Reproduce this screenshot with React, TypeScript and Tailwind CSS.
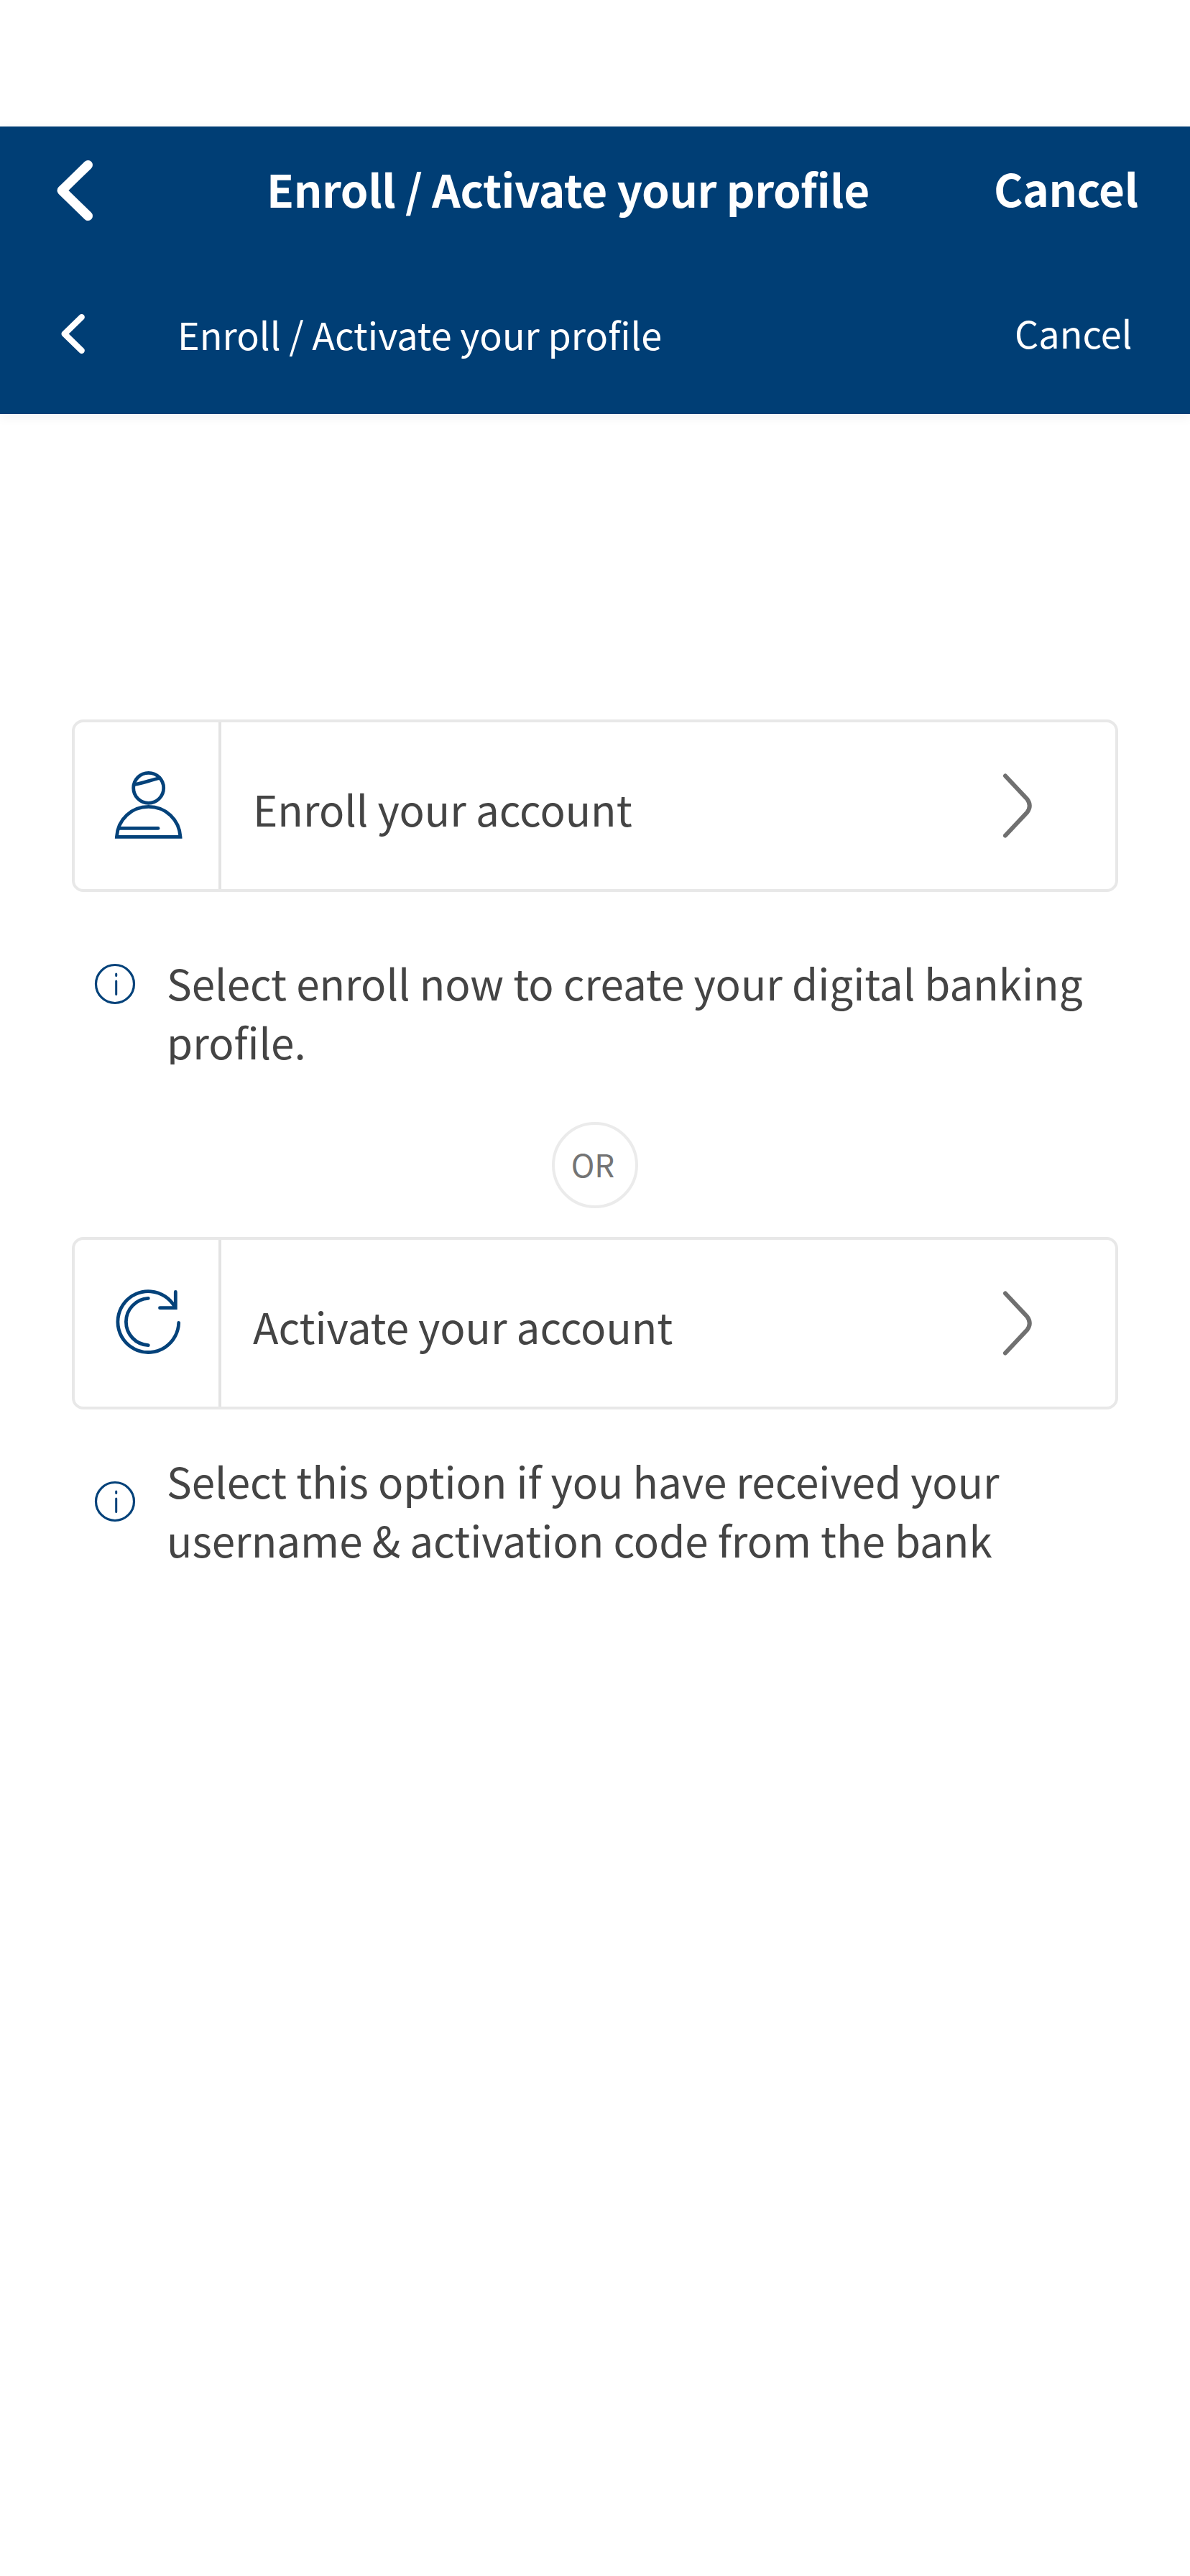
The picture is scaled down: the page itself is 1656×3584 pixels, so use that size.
import type { ReactNode } from "react";

function BackIcon({ className }: { className: string }) {
  return (
    <svg className={className} viewBox="0 0 50 84" fill="none" stroke="#fff" strokeWidth="13" strokeLinecap="round" strokeLinejoin="round">
      <path d="M43.5 6.5 L7 42 L43.5 77.5" />
    </svg>
  );
}

function PersonIcon() {
  return (
    <svg className="h-[100px] w-[100px]" viewBox="0 0 100 100" fill="none" stroke="#04427a" strokeWidth="4.8">
      <circle cx="49.7" cy="29.3" r="21" />
      <path d="M30.5 24.4 C40 23 52 18.5 65 15.5" strokeLinecap="round" />
      <path d="M5.4 97.3 C7 73 26 55.4 49.7 55.4 C73.4 55.4 92.4 73 94 97.3 Z" />
      <path d="M9 85.4 H63" strokeLinecap="round" />
    </svg>
  );
}

function RefreshIcon() {
  return (
    <svg className="h-[100px] w-[100px]" viewBox="0 0 100 100" fill="none" stroke="#04427a" strokeWidth="4.8" strokeLinecap="round">
      <path d="M91.7 53.5 A42.4 42.4 0 1 1 85.8 30.5" />
      <path d="M49.3 84.7 A32.7 32.7 0 0 1 49.3 19.4" />
      <path d="M87.3 10.5 V32.7 H65.5" />
    </svg>
  );
}

function InfoIcon() {
  return (
    <svg className="h-[58px] w-[58px] shrink-0" viewBox="0 0 58 58" fill="none" stroke="#04427a" strokeLinecap="round">
      <circle cx="29" cy="29" r="26.5" strokeWidth="3.2" />
      <path d="M30.7 15 V17.5 M30.7 25 V43.5" strokeWidth="3" />
    </svg>
  );
}

function OptionCard({ icon, label }: { icon: ReactNode; label: string }) {
  return (
    <button className="flex h-[240px] w-[1456px] items-stretch rounded-[16px] border-4 border-[#e8e8e8] bg-white text-left">
      <span className="flex w-[204px] shrink-0 items-start justify-center border-r-4 border-[#e3e3e3] pl-[6px] pt-[62px]">{icon}</span>
      <span className="w-[1088px] shrink-0 pl-[44px] pt-[80px] text-[58.3px] leading-[80px] text-[#444]">{label}</span>
      <svg className="mt-[70px] h-[92px] w-[40px] shrink-0" viewBox="0 0 40 92" fill="none" stroke="#707070" strokeWidth="6" strokeLinecap="round">
        <path d="M3 4.5 L33.5 37 Q40 46 33.5 55 L3 87.5" />
      </svg>
    </button>
  );
}

export default function App() {
  return (
    <div className="h-[3584px] w-[1656px] overflow-hidden bg-white pt-[176px] font-['Noto_Sans_CJK_SC',sans-serif]">
      <header className="h-[400px] bg-[#003e75] text-white shadow-[0_4px_16px_rgba(0,0,0,0.06)]">
        <div className="flex h-[178px] items-start whitespace-nowrap text-[62px] font-bold leading-[80px] tracking-[-0.45px]">
          <BackIcon className="ml-[79px] mt-[47px] h-[84px] w-[50px]" />
          <h1 className="ml-[242px] mt-[46px] w-[1012px]">Enroll / Activate your profile</h1>
          <button className="mt-[45px] tracking-[-0.45px]">Cancel</button>
        </div>
        <div className="flex h-[222px] items-start whitespace-nowrap text-[52.2px] leading-[80px]">
          <BackIcon className="ml-[85px] mt-[83px] h-[55px] w-[33px]" />
          <h2 className="ml-[129px] mt-[70px] w-[1165px]">Enroll / Activate your profile</h2>
          <button className="mt-[68px]">Cancel</button>
        </div>
      </header>
      <main className="px-[100px] pt-[425px]">
        <OptionCard icon={<PersonIcon />} label="Enroll your account" />
        <div className="mt-[80px] flex h-[160px] overflow-hidden pl-[31px]">
          <div className="mt-[19px]"><InfoIcon /></div>
          <p className="ml-[43px] mt-[5px] whitespace-nowrap text-[58.35px] leading-[82px] text-[#444]">
            Select enroll now to create your digital banking<br />profile.
          </p>
        </div>
        <div className="mx-auto mt-[80px] flex size-[120px] items-center justify-center rounded-full border-4 border-[#ebebeb] pb-[5px] pr-[6px] text-[44px] leading-none text-[#747474]">OR</div>
        <div className="mt-[40px]">
          <OptionCard icon={<RefreshIcon />} label="Activate your account" />
        </div>
        <div className="flex pl-[31px] pt-[57px]">
          <div className="mt-[42px]"><InfoIcon /></div>
          <p className="ml-[43px] mt-[1px] whitespace-nowrap text-[58.35px] leading-[82px] text-[#444]">
            Select this option if you have received your<br />username &amp; activation code from the bank
          </p>
        </div>
      </main>
    </div>
  );
}
